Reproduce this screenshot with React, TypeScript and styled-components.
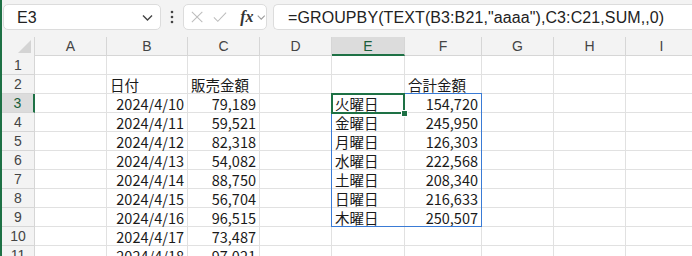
import React from "react";
import styled, { createGlobalStyle } from "styled-components";

const GlobalStyle = createGlobalStyle`
  html, body { margin: 0; padding: 0; background: #ffffff; }
  body { font-family: "Noto Sans CJK JP", "Noto Sans", sans-serif; overflow: hidden; }
  * { box-sizing: border-box; }
`;

const GREEN = "#1e7145";
const BLUE = "#3a7bd5";
const GRID = "#e1e1e1";

const colWidths = [33, 72, 81, 72, 72, 73, 77, 72, 72, 72];
const colNames = ["A", "B", "C", "D", "E", "F", "G", "H", "I"];
const HEADER_H = 19;
const ROW_H = 19;

const dates = ["2024/4/10", "2024/4/11", "2024/4/12", "2024/4/13", "2024/4/14", "2024/4/15", "2024/4/16", "2024/4/17", "2024/4/18"];
const sales = ["79,189", "59,521", "82,318", "54,082", "88,750", "56,704", "96,515", "73,487", "97,021"];
const days = ["火曜日", "金曜日", "月曜日", "水曜日", "土曜日", "日曜日", "木曜日"];
const totals = ["154,720", "245,950", "126,303", "222,568", "208,340", "216,633", "250,507"];

const Page = styled.div`
  width: 692px;
  height: 256px;
  overflow: hidden;
  border-left: 2px solid ${GREEN};
  background: #f3f3f3;
`;

const Toolbar = styled.div`
  height: 37px;
  display: flex;
  align-items: flex-start;
  padding: 4px 0 0 1px;
  gap: 0;
`;

const Field = styled.div<{ $w?: number }>`
  height: 26px;
  width: ${(p) => (p.$w ? `${p.$w}px` : "auto")};
  flex: ${(p) => (p.$w ? "none" : "1")};
  background: #ffffff;
  border: 1px solid #dcdcdc;
  border-right: ${(p) => (p.$w ? "1px solid #dcdcdc" : "none")};
  border-radius: ${(p) => (p.$w ? "5px" : "5px 0 0 5px")};
  display: flex;
  align-items: center;
  font-family: "Liberation Sans", "Noto Sans", sans-serif;
  font-size: 16px;
  color: #222;
`;

const NameText = styled.span`
  flex: 1;
  padding-left: 13px;
  padding-top: 1px;
`;

const Dots = styled.div`
  width: 22px;
  height: 26px;
  display: flex;
  align-items: center;
  justify-content: center;
`;

const FormulaText = styled.span`
  padding-left: 14px;
  padding-top: 1px;
  white-space: nowrap;
  letter-spacing: 0.1px;
`;

const FxLabel = styled.span`
  font-family: "Liberation Serif", "DejaVu Serif", serif;
  font-style: italic;
  font-weight: bold;
  font-size: 16px;
  color: #333;
  margin-left: 13px;
`;

const Sheet = styled.div`
  position: relative;
  display: grid;
  grid-template-columns: ${colWidths.map((w) => `${w}px`).join(" ")};
  grid-auto-rows: ${ROW_H}px;
  background: #ffffff;
`;

const Corner = styled.div`
  height: ${HEADER_H}px;
  background: #f3f3f3;
  position: relative;
  border-right: 1px solid #d6d6d6;
`;

const CornerTri = styled.div`
  position: absolute;
  right: 3px;
  bottom: 3px;
  width: 0;
  height: 0;
  border-left: 13px solid transparent;
  border-bottom: 13px solid #d4d4d4;
`;

const ColHead = styled.div<{ $sel?: boolean }>`
  height: ${HEADER_H}px;
  background: ${(p) => (p.$sel ? "#dcdcdc" : "#f3f3f3")};
  border-right: 1px solid #d6d6d6;
  border-bottom: ${(p) => (p.$sel ? `2px solid ${GREEN}` : "1px solid #d6d6d6")};
  display: flex;
  align-items: center;
  justify-content: center;
  font-family: "Liberation Sans", "Noto Sans", sans-serif;
  font-size: 14px;
  color: ${(p) => (p.$sel ? "#1b5e3a" : "#444")};
  padding-top: ${(p) => (p.$sel ? "1px" : "0")};
`;

const RowHead = styled.div<{ $sel?: boolean }>`
  background: ${(p) => (p.$sel ? "#dcdcdc" : "#f3f3f3")};
  border-bottom: 1px solid #d6d6d6;
  border-right: ${(p) => (p.$sel ? `2px solid ${GREEN}` : "1px solid #d6d6d6")};
  display: flex;
  align-items: center;
  justify-content: center;
  font-family: "Liberation Sans", "Noto Sans", sans-serif;
  font-size: 14px;
  color: ${(p) => (p.$sel ? "#1b5e3a" : "#444")};
`;

const Cell = styled.div<{ $right?: boolean }>`
  border-right: 1px solid ${GRID};
  border-bottom: 1px solid ${GRID};
  display: flex;
  align-items: center;
  justify-content: ${(p) => (p.$right ? "flex-end" : "flex-start")};
  padding: 0 3px 0 3px;
  font-size: 14.5px;
  color: #1a1a1a;
  white-space: nowrap;
  overflow: visible;
`;

const Spill = styled.div`
  position: absolute;
  border: 1px solid ${BLUE};
  pointer-events: none;
`;

const Selection = styled.div`
  position: absolute;
  border: 2px solid ${GREEN};
  pointer-events: none;
`;

const Handle = styled.div`
  position: absolute;
  right: -5px;
  bottom: -5px;
  width: 7px;
  height: 7px;
  background: ${GREEN};
  border: 1px solid #ffffff;
`;

const colLeft = (i: number) => colWidths.slice(0, i).reduce((a, b) => a + b, 0);

export default function App() {
  const rows: React.ReactNode[] = [];
  for (let r = 1; r <= 11; r++) {
    const cells: React.ReactNode[] = [];
    for (let c = 0; c < colNames.length; c++) {
      const col = colNames[c];
      let text = "";
      let right = false;
      if (r === 2) {
        if (col === "B") text = "日付";
        if (col === "C") text = "販売金額";
        if (col === "F") text = "合計金額";
      }
      if (r >= 3) {
        if (col === "B") { text = dates[r - 3]; right = true; }
        if (col === "C") { text = sales[r - 3]; right = true; }
        if (r <= 9 && col === "E") text = days[r - 3];
        if (r <= 9 && col === "F") { text = totals[r - 3]; right = true; }
      }
      cells.push(
        <Cell key={`${col}${r}`} $right={right}>
          {text}
        </Cell>
      );
    }
    rows.push(
      <React.Fragment key={r}>
        <RowHead $sel={r === 3}>{r}</RowHead>
        {cells}
      </React.Fragment>
    );
  }

  const eLeft = colLeft(5);
  const top3 = HEADER_H + ROW_H * 2;

  return (
    <>
      <GlobalStyle />
      <Page>
        <Toolbar>
          <Field $w={158}>
            <NameText>E3</NameText>
            <svg width="24" height="24" viewBox="0 0 24 24">
              <path d="M7 10.5l4.5 4.5 4.5-4.5" fill="none" stroke="#444" strokeWidth="1.4" />
            </svg>
          </Field>
          <Dots>
            <svg width="4" height="14" viewBox="0 0 4 14">
              <circle cx="2" cy="2" r="1.3" fill="#444" />
              <circle cx="2" cy="7" r="1.3" fill="#444" />
              <circle cx="2" cy="12" r="1.3" fill="#444" />
            </svg>
          </Dots>
          <Field $w={84}>
            <svg width="14" height="14" viewBox="0 0 14 14" style={{ marginLeft: 7 }}>
              <path d="M1 1l12 12M13 1L1 13" stroke="#bdbdbd" strokeWidth="1.2" fill="none" />
            </svg>
            <svg width="16" height="14" viewBox="0 0 16 14" style={{ marginLeft: 10 }}>
              <path d="M1 7.5l4.5 4.5L15 2" stroke="#bdbdbd" strokeWidth="1.2" fill="none" />
            </svg>
            <FxLabel>fx</FxLabel>
            <svg width="12" height="12" viewBox="0 0 12 12" style={{ marginLeft: 2 }}>
              <path d="M2 4.5l4 4 4-4" fill="none" stroke="#9a9a9a" strokeWidth="1.2" />
            </svg>
          </Field>
          <div style={{ width: 6 }} />
          <Field>
            <FormulaText>=GROUPBY(TEXT(B3:B21,"aaaa"),C3:C21,SUM,,0)</FormulaText>
          </Field>
        </Toolbar>
        <Sheet>
          <Corner>
            <CornerTri />
          </Corner>
          {colNames.map((c) => (
            <ColHead key={c} $sel={c === "E"}>
              {c}
            </ColHead>
          ))}
          {rows}
          <Spill
            style={{
              left: eLeft - 1,
              top: top3 - 1,
              width: colWidths[5] + colWidths[6] + 1,
              height: ROW_H * 7 + 1,
            }}
          />
          <Selection
            style={{ left: eLeft - 1, top: top3 - 1, width: colWidths[5] + 1, height: ROW_H + 2 }}
          >
            <Handle />
          </Selection>
        </Sheet>
      </Page>
    </>
  );
}
